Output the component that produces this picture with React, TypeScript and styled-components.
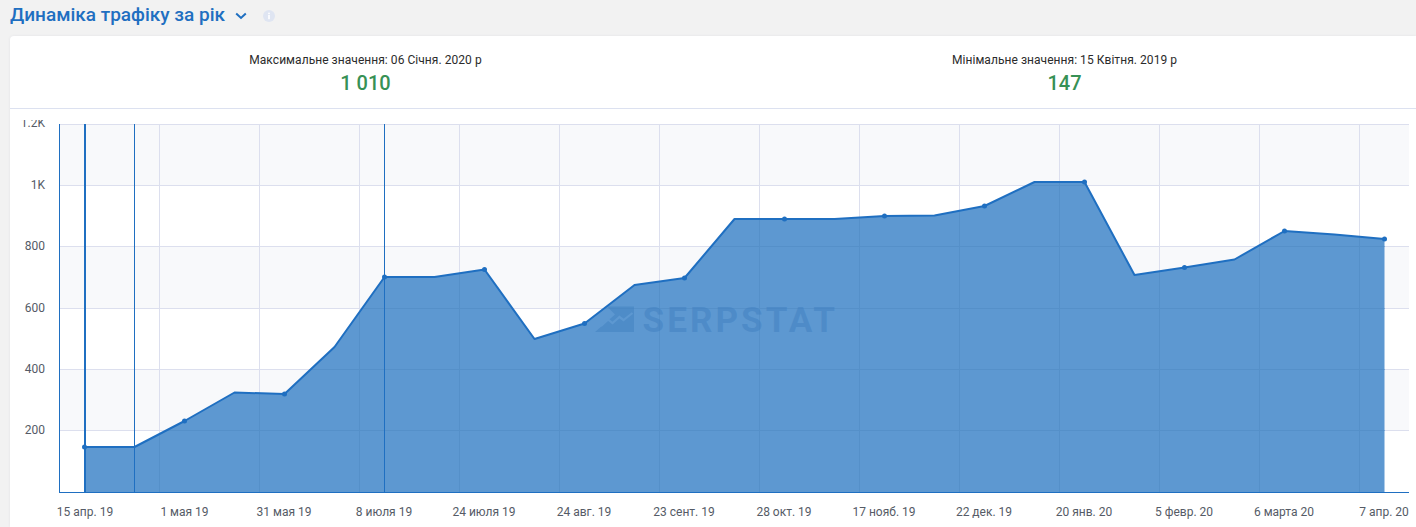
import React from "react";
import styled, { createGlobalStyle } from "styled-components";

const Global = createGlobalStyle`
  html, body { margin: 0; padding: 0; background: #f2f2f2; overflow: hidden; }
  body { font-family: Roboto, "Liberation Sans", sans-serif; }
`;

const Page = styled.div`
  width: 1416px;
  height: 527px;
  padding-left: 10px;
  box-sizing: border-box;
  overflow: hidden;
`;

const TitleRow = styled.div`
  height: 36px;
  display: flex;
  align-items: flex-start;
`;

const Title = styled.h2`
  margin: 0;
  font-size: 19px;
  line-height: 30px;
  font-weight: 500;
  color: #1f6fc1;
`;

const Chevron = styled.svg`
  width: 12px;
  height: 8px;
  margin: 12px 0 0 10px;
`;

const Info = styled.svg`
  width: 12px;
  height: 12px;
  margin: 10px 0 0 16px;
`;

const Card = styled.section`
  height: 491px;
  background: #fff;
  border-radius: 4px 0 0 0;
  box-shadow: 0 0 3px rgba(60, 70, 100, 0.08);
`;

const Stats = styled.div`
  height: 73px;
  box-sizing: border-box;
  padding: 0 2px 0 6px;
  display: grid;
  grid-template-columns: 699px 699px;
  border-bottom: 1px solid #dce1f0;
`;

const Stat = styled.div`
  text-align: center;
  padding-top: 16px;
`;

const StatLabel = styled.div`
  font-size: 12px;
  line-height: 16px;
  letter-spacing: 0.05px;
  color: #2b2b2b;
`;

const StatValue = styled.div`
  font-size: 20px;
  line-height: 24px;
  margin-top: 3px;
  font-weight: 500;
  color: #379155;
`;

const ChartWrap = styled.div`
  padding-top: 11px;
`;

const ChartSvg = styled.svg`
  display: block;
  width: 1406px;
  height: 407px;
  font-family: Roboto, "Liberation Sans", sans-serif;
`;

const AxisText = styled.text`
  font-size: 12px;
  fill: #555b66;
`;

const Watermark = styled.text`
  font-size: 35px;
  font-weight: 700;
  letter-spacing: 3.1px;
  fill: #3f7fc0;
  fill-opacity: 0.5;
`;

const values = [447, 447, 421, 392.5, 394, 347, 277, 277, 269.5, 339, 323.5, 285, 278, 219, 219, 219, 216, 215.5, 206, 182, 182, 275, 267.5, 259.5, 231, 234.5, 239];
const px = (i: number) => 84.5 + 50 * i;
const line = values.map((y, i) => `${px(i)},${y}`).join(" ");
const area = `84.5,492 ${line} 1384.5,492`;

const bands = [124, 246, 369];
const bandHeights = [61, 62, 61];
const hLines = [124, 185, 246, 308, 369, 430];
const vLines = [159, 259, 359, 459, 559, 659, 759, 859, 959, 1059, 1159, 1259, 1359].map((v) => v + 0.5);
const yLabels: [string, number][] = [["1.2K", 127], ["1K", 188.5], ["800", 250], ["600", 312], ["400", 373], ["200", 434]];
const xLabels: [string, number][] = [
  ["15 апр. 19", 85], ["1 мая 19", 184.5], ["31 мая 19", 284], ["8 июля 19", 384], ["24 июля 19", 484],
  ["24 авг. 19", 584], ["23 сент. 19", 684], ["28 окт. 19", 784], ["17 нояб. 19", 884], ["22 дек. 19", 984],
  ["20 янв. 20", 1084], ["5 февр. 20", 1184], ["6 марта 20", 1284], ["7 апр. 20", 1384],
];

export default function App() {
  return (
    <Page>
      <Global />
      <TitleRow>
        <Title>Динаміка трафіку за рік</Title>
        <Chevron viewBox="0 0 12 8">
          <path d="M1.2 1.5 6 6l4.8-4.5" fill="none" stroke="#1f6fc1" strokeWidth="2" />
        </Chevron>
        <Info viewBox="0 0 12 12">
          <circle cx="6" cy="6" r="6" fill="#dfe5f2" />
          <rect x="5.2" y="5" width="1.6" height="4.2" fill="#fff" />
          <rect x="5.2" y="2.7" width="1.6" height="1.5" fill="#fff" />
        </Info>
      </TitleRow>
      <Card>
        <Stats>
          <Stat>
            <StatLabel>Максимальне значення: 06 Січня. 2020 р</StatLabel>
            <StatValue>1 010</StatValue>
          </Stat>
          <Stat>
            <StatLabel>Мінімальне значення: 15 Квітня. 2019 р</StatLabel>
            <StatValue>147</StatValue>
          </Stat>
        </Stats>
        <ChartWrap>
          <ChartSvg viewBox="10 120 1406 407">
            <defs>
              <clipPath id="areaClip">
                <polygon points={area} />
              </clipPath>
            </defs>
            {bands.map((y, i) => (
              <rect key={y} x="60" y={y} width="1349" height={bandHeights[i]} fill="#f8f9fb" />
            ))}
            {hLines.map((y) => (
              <line key={y} x1="60" x2="1409" y1={y + 0.5} y2={y + 0.5} stroke="#dcdfee" />
            ))}
            {vLines.map((x) => (
              <line key={x} x1={x} x2={x} y1="124" y2="492" stroke="#dcdfee" />
            ))}
            <polygon points={area} fill="#5d98d1" />
            <g clipPath="url(#areaClip)">
              {hLines.map((y) => (
                <line key={y} x1="60" x2="1409" y1={y + 0.5} y2={y + 0.5} stroke="#5590c9" />
              ))}
              {vLines.map((x) => (
                <line key={x} x1={x} x2={x} y1="124" y2="492" stroke="#5590c9" />
              ))}
            </g>
            <path d="M607 306.5h27v25.5h-39l20-17.5z" fill="#3f7fc0" fillOpacity="0.5" />
            <path d="M601 326l7-6.5 4.5 3.5 7-6 4 3 9-7" fill="none" stroke="#5d98d1" strokeWidth="2.2" />
            <Watermark x="642.5" y="332">SERPSTAT</Watermark>
            <line x1="59.5" x2="59.5" y1="124" y2="492.5" stroke="#1f6fc1" />
            <line x1="59" x2="1409" y1="492.5" y2="492.5" stroke="#1f6fc1" />
            <line x1="85" x2="85" y1="124" y2="492" stroke="#1f6fc1" strokeWidth="2" />
            <line x1="134.5" x2="134.5" y1="124" y2="492" stroke="#1f6fc1" />
            <line x1="384.5" x2="384.5" y1="124" y2="492" stroke="#1f6fc1" />
            <polyline points={line} fill="none" stroke="#1f6fc1" strokeWidth="2" strokeLinejoin="round" />
            {values.map((y, i) =>
              i % 2 === 0 ? <circle key={i} cx={px(i)} cy={y} r="2.5" fill="#1f6fc1" /> : null
            )}
            {yLabels.map(([t, y]) => (
              <AxisText key={t} x="45" y={y} textAnchor="end">{t}</AxisText>
            ))}
            {xLabels.map(([t, x]) => (
              <AxisText key={t} x={x} y="516" textAnchor="middle">{t}</AxisText>
            ))}
          </ChartSvg>
        </ChartWrap>
      </Card>
    </Page>
  );
}
